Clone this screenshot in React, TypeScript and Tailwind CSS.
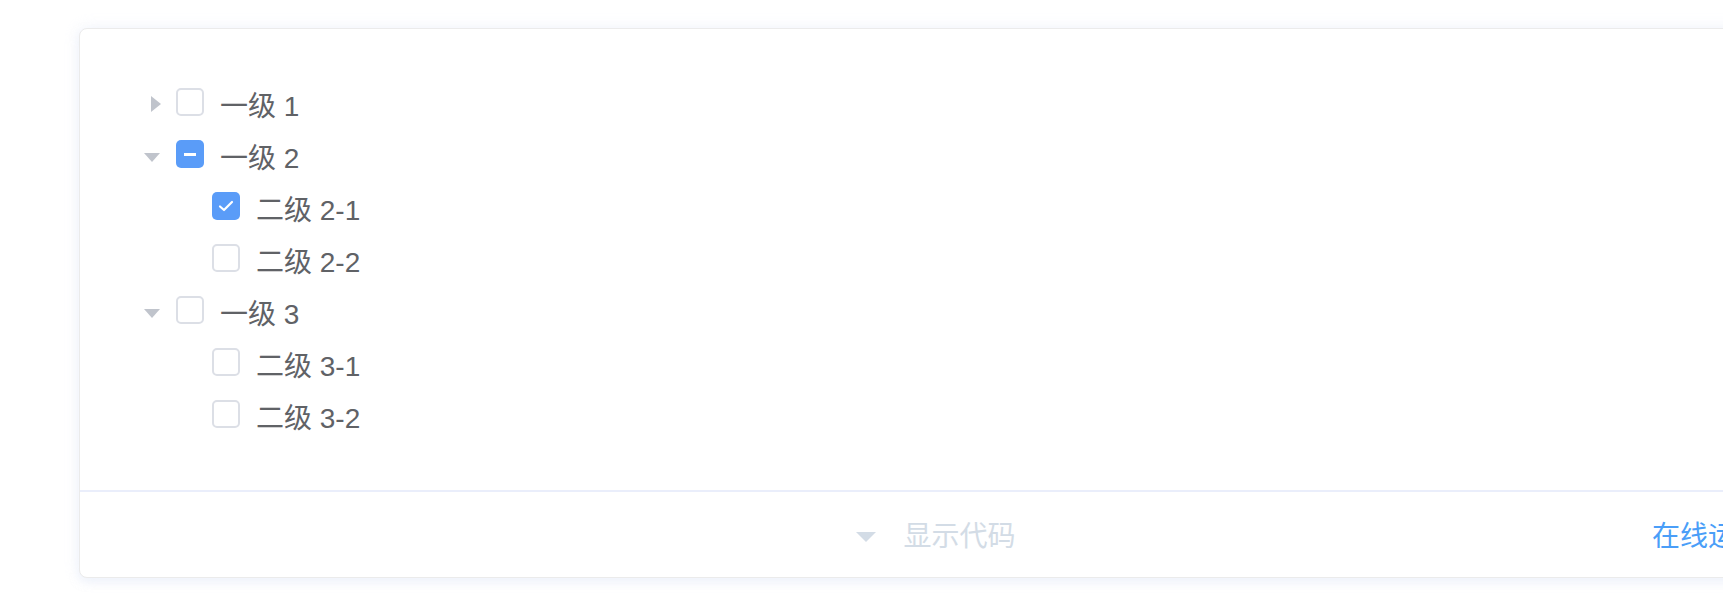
import React from 'react';

type Node = {
    label: string;
    level: number;
    arrow?: 'right' | 'down';
    state: 'none' | 'half' | 'checked';
};

const nodes: Node[] = [
    { label: '一级 1', level: 0, arrow: 'right', state: 'none' },
    { label: '一级 2', level: 0, arrow: 'down', state: 'half' },
    { label: '二级 2-1', level: 1, state: 'checked' },
    { label: '二级 2-2', level: 1, state: 'none' },
    { label: '一级 3', level: 0, arrow: 'down', state: 'none' },
    { label: '二级 3-1', level: 1, state: 'none' },
    { label: '二级 3-2', level: 1, state: 'none' },
];

function Caret({ dir }: { dir?: 'right' | 'down' }) {
    if (!dir) return <span className="w-[48px] shrink-0" />;
    return (
        <span className="w-[48px] h-[52px] shrink-0 flex items-center justify-center">
            {dir === 'right' ? (
                <svg width="10" height="16" viewBox="0 0 10 16" className="ml-[8px] mt-[3px]">
                    <path d="M0 0 L10 8 L0 16 Z" fill="#c0c4cc" />
                </svg>
            ) : (
                <svg width="16" height="9" viewBox="0 0 16 9" className="mt-[7px]">
                    <path d="M0 0 L16 0 L8 9 Z" fill="#c0c4cc" />
                </svg>
            )}
        </span>
    );
}

function Checkbox({ state }: { state: Node['state'] }) {
    if (state === 'none') {
        return <span className="w-[28px] h-[28px] shrink-0 rounded-[5px] border-2 border-[#dcdfe6] bg-white" />;
    }
    return (
        <span className="w-[28px] h-[28px] shrink-0 rounded-[5px] bg-[#5a9cf8] flex items-center justify-center">
            {state === 'half' ? (
                <span className="block w-[12px] h-[3px] bg-white" />
            ) : (
                <svg width="16" height="12" viewBox="0 0 16 12">
                    <path d="M2 6.5 L6 10 L14 2" stroke="#fff" strokeWidth="2.2" fill="none" strokeLinecap="round" strokeLinejoin="round" />
                </svg>
            )}
        </span>
    );
}

export default function App() {
    return (
        <div className="w-[1723px] h-[595px] bg-white overflow-hidden pt-[28px] font-['Liberation_Sans','Noto_Sans_CJK_SC',sans-serif]">
            <div className="ml-[79px] w-[1714px] rounded-[8px] border border-[#ebebeb] bg-white shadow-[0_0_16px_0_rgba(232,237,250,0.6),0_4px_8px_0_rgba(232,237,250,0.5)]">
                <div className="pt-[47px] pb-[50px] pl-[48px]">
                    {nodes.map((n) => (
                        <div key={n.label} className="h-[52px] flex items-center" style={{ paddingLeft: n.level * 36 }}>
                            <Caret dir={n.arrow} />
                            <Checkbox state={n.state} />
                            <span className="ml-[16px] mt-[9px] text-[28px] leading-none text-[#606266]">{n.label}</span>
                        </div>
                    ))}
                </div>
                <div className="h-[87px] border-t-2 border-[#eaeefb] grid grid-cols-[1fr_auto_1fr] items-center pt-[5px]">
                    <span />
                    <div className="flex items-center gap-[27px]">
                        <svg width="20" height="10" viewBox="0 0 20 10">
                            <path d="M0 0 L20 0 L10 10 Z" fill="#d3dce6" />
                        </svg>
                        <span className="text-[28px] text-[#d3dce6] leading-none">显示代码</span>
                    </div>
                    <div className="flex justify-end pr-[28px]">
                        <span className="text-[28px] text-[#4a9ef8] leading-none">在线运行</span>
                    </div>
                </div>
            </div>
        </div>
    );
}
